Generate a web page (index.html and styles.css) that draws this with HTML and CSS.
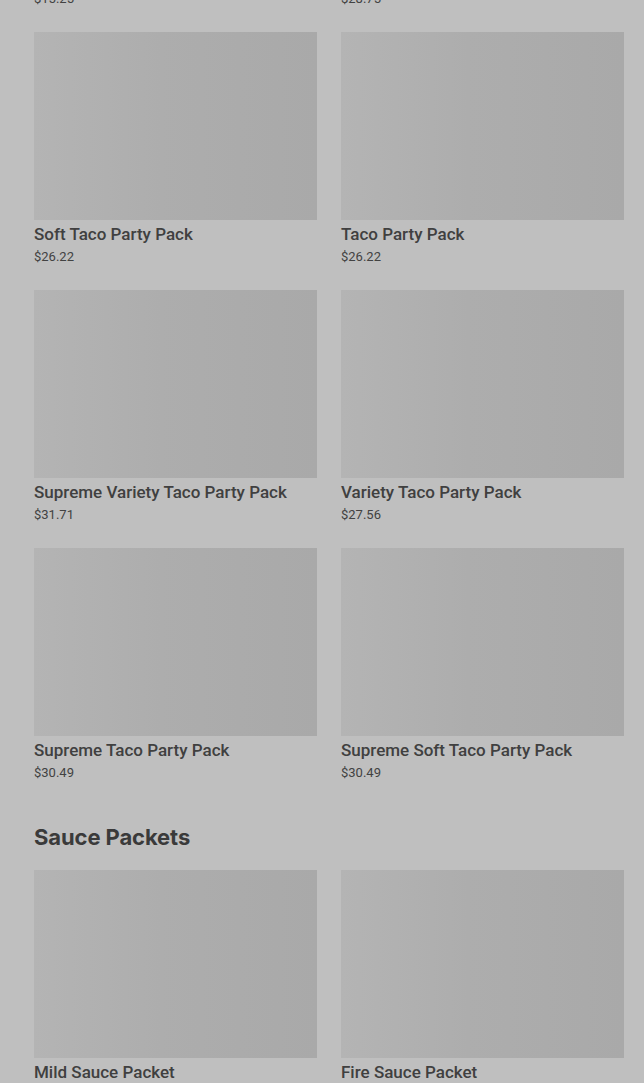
FILE: index.html
```html
<!DOCTYPE html>
<html lang="en">
<head>
<meta charset="utf-8">
<title>Menu</title>
<link rel="stylesheet" href="styles.css">
</head>
<body>
<main class="page">
  <section class="section section-first">
    <div class="grid">
      <div class="card"><div class="thumb"></div><div class="name">Crunchy Taco Party Pack</div><div class="price">$15.25</div></div>
      <div class="card"><div class="thumb"></div><div class="name">Taco Supreme Party Pack</div><div class="price">$28.75</div></div>
      <div class="card"><div class="thumb"></div><div class="name">Soft Taco Party Pack</div><div class="price">$26.22</div></div>
      <div class="card"><div class="thumb"></div><div class="name">Taco Party Pack</div><div class="price">$26.22</div></div>
      <div class="card"><div class="thumb"></div><div class="name">Supreme Variety Taco Party Pack</div><div class="price">$31.71</div></div>
      <div class="card"><div class="thumb"></div><div class="name">Variety Taco Party Pack</div><div class="price">$27.56</div></div>
      <div class="card"><div class="thumb"></div><div class="name">Supreme Taco Party Pack</div><div class="price">$30.49</div></div>
      <div class="card"><div class="thumb"></div><div class="name">Supreme Soft Taco Party Pack</div><div class="price">$30.49</div></div>
    </div>
  </section>
  <section class="section">
    <h2 class="section-title">Sauce Packets</h2>
    <div class="grid">
      <div class="card"><div class="thumb"></div><div class="name">Mild Sauce Packet</div><div class="price">$0.00</div></div>
      <div class="card"><div class="thumb"></div><div class="name">Fire Sauce Packet</div><div class="price">$0.00</div></div>
    </div>
  </section>
</main>
</body>
</html>
```
FILE: styles.css
```css
html, body {
  margin: 0;
  padding: 0;
  background: #bfbfbf;
  overflow: hidden;
}
body {
  font-family: Roboto, "Liberation Sans", sans-serif;
  color: #3c3c3c;
}
.page {
  padding: 0 20px 0 34px;
  margin-top: -226px;
}
.grid {
  display: grid;
  grid-template-columns: 1fr 1fr;
  column-gap: 24px;
  row-gap: 24px;
}
.card {
  display: flex;
  flex-direction: column;
}
.thumb {
  height: 188px;
  background: linear-gradient(90deg, #b4b4b4 0%, #adadad 45%, #a9a9a9 100%);
}
.name {
  margin-top: 4px;
  font-size: 17px;
  line-height: 20px;
  font-weight: 500;
  color: #404040;
  white-space: nowrap;
}
.price {
  margin-top: 4px;
  font-size: 13px;
  line-height: 18px;
  color: #424242;
}
.section-title {
  margin: 41px 0 19px;
  font-family: Inter, "Liberation Sans", sans-serif;
  font-size: 22px;
  line-height: 28px;
  font-weight: 700;
  letter-spacing: -0.1px;
  color: #3a3a3a;
}
```
